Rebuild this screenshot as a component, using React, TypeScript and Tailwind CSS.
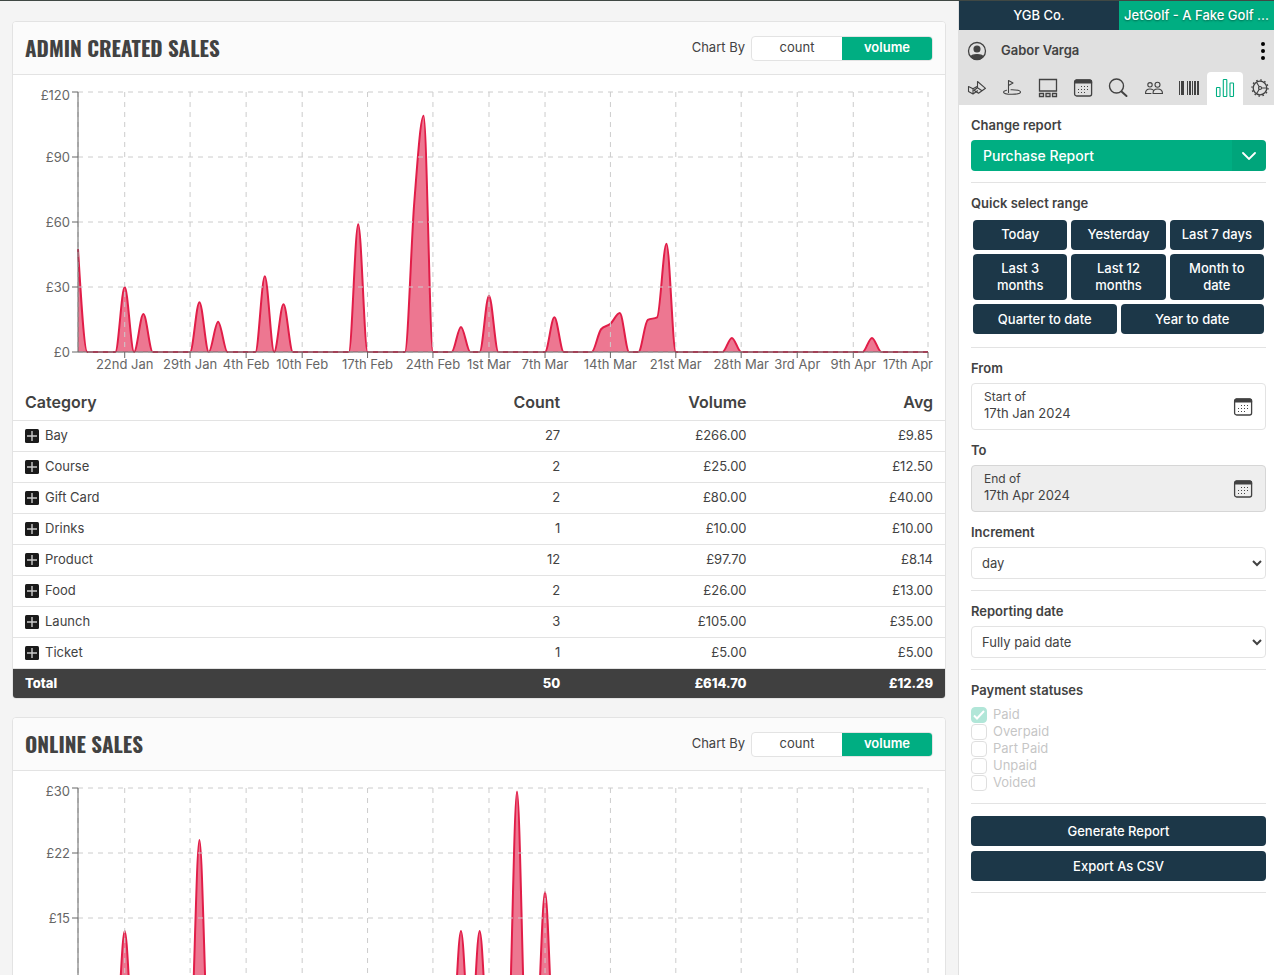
import React, { useLayoutEffect, useRef, useState } from 'react';

type Row = [name: string, count: string, volume: string, avg: string];

const DAYS = 91;

const ticks = [
  { day: 5, label: '22nd Jan' },
  { day: 12, label: '29th Jan' },
  { day: 18, label: '4th Feb' },
  { day: 24, label: '10th Feb' },
  { day: 31, label: '17th Feb' },
  { day: 38, label: '24th Feb' },
  { day: 44, label: '1st Mar' },
  { day: 50, label: '7th Mar' },
  { day: 57, label: '14th Mar' },
  { day: 64, label: '21st Mar' },
  { day: 71, label: '28th Mar' },
  { day: 77, label: '3rd Apr' },
  { day: 83, label: '9th Apr' },
  { day: 91, label: '17th Apr' },
];

const adminSales: Record<number, number> = {
  0: 47.5, 5: 30, 7: 17.5, 13: 23, 15: 14, 20: 35, 22: 22, 30: 59, 36: 69, 37: 109,
  41: 11.5, 44: 26, 51: 16, 56: 10.5, 57: 13, 58: 18, 61: 14.8, 62: 16, 63: 50, 70: 6.5, 85: 6.5,
};

const onlineSales: Record<number, number> = { 5: 13.5, 13: 24, 41: 13.5, 43: 13.5, 47: 29.6, 50: 18 };

const rows: Row[] = [
  ['Bay', '27', '£266.00', '£9.85'],
  ['Course', '2', '£25.00', '£12.50'],
  ['Gift Card', '2', '£80.00', '£40.00'],
  ['Drinks', '1', '£10.00', '£10.00'],
  ['Product', '12', '£97.70', '£8.14'],
  ['Food', '2', '£26.00', '£13.00'],
  ['Launch', '3', '£105.00', '£35.00'],
  ['Ticket', '1', '£5.00', '£5.00'],
];

// Monotone cubic interpolation, so the curve never dips below the baseline
const monotonePath = (pts: [number, number][]) => {
  const n = pts.length;
  const slope = (i: number) => (pts[i + 1][1] - pts[i][1]) / (pts[i + 1][0] - pts[i][0]);
  const tangents = pts.map((_, i) => {
    if (i === 0 || i === n - 1) return 0;
    const a = slope(i - 1);
    const b = slope(i);
    return (Math.sign(a) + Math.sign(b)) * Math.min(Math.abs(a), Math.abs(b), 0.25 * Math.abs(a + b)) || 0;
  });
  tangents[0] = (3 * slope(0) - tangents[1]) / 2;
  let d = `M${pts[0][0]},${pts[0][1]}`;
  for (let i = 1; i < n; i++) {
    const [x0, y0] = pts[i - 1];
    const [x1, y1] = pts[i];
    const dx = (x1 - x0) / 3;
    d += `C${x0 + dx},${y0 + dx * tangents[i - 1]},${x1 - dx},${y1 - dx * tangents[i]},${x1},${y1}`;
  }
  return d;
};

const AreaChart = ({ data, max, yLabels }: { data: Record<number, number>; max: number; yLabels: string[] }) => {
  const ref = useRef<HTMLDivElement>(null);
  const [width, setWidth] = useState(932);

  useLayoutEffect(() => {
    const el = ref.current!;
    const update = () => setWidth(el.clientWidth);
    update();
    const observer = new ResizeObserver(update);
    observer.observe(el);
    return () => observer.disconnect();
  }, []);

  const left = 65;
  const right = width - 17;
  const top = 17;
  const bottom = 277;
  const x = (day: number) => left + (day / DAYS) * (right - left);
  const y = (value: number) => bottom - (value / max) * (bottom - top);
  const points = Array.from({ length: DAYS + 1 }, (_, i): [number, number] => [x(i), y(data[i] ?? 0)]);
  const line = monotonePath(points);
  const yTicks = yLabels.map((label, i) => ({ label, pos: top + (i * (bottom - top)) / (yLabels.length - 1) }));

  return (
    <div ref={ref} className="w-full overflow-hidden">
      <svg width={width} height={310} className="block text-[13px]" fill="#666">
        <path d={`${line}L${right},${bottom}L${left},${bottom}Z`} fill="#e11d48" fillOpacity={0.6} />
        <path d={line} fill="none" stroke="#e11d48" strokeWidth={2} />
        <g stroke="#ccc" strokeDasharray="5 5">
          {yTicks.map((t) => <line key={t.label} x1={left} x2={right} y1={t.pos} y2={t.pos} />)}
          <line x1={left} x2={left} y1={top} y2={bottom} />
          {ticks.map((t) => <line key={t.day} x1={x(t.day)} x2={x(t.day)} y1={top} y2={bottom} />)}
        </g>
        <g stroke="#666">
          <line x1={left} x2={right} y1={bottom} y2={bottom} />
          <line x1={left} x2={left} y1={top} y2={bottom} />
          {yTicks.map((t) => <line key={t.label} x1={left - 6} x2={left} y1={t.pos} y2={t.pos} />)}
          {ticks.map((t) => <line key={t.day} x1={x(t.day)} x2={x(t.day)} y1={bottom} y2={bottom + 6} />)}
        </g>
        {yTicks.map((t, i) => (
          <text key={t.label} x={left - 8} y={t.pos + (i === 0 ? 8 : 5)} textAnchor="end">{t.label}</text>
        ))}
        {ticks.map((t) => (
          <text
            key={t.day}
            x={t.day === DAYS ? right + 5 : x(t.day)}
            y={bottom + 17}
            textAnchor={t.day === DAYS ? 'end' : 'middle'}
          >
            {t.label}
          </text>
        ))}
      </svg>
    </div>
  );
};

const ReportCard = ({ title, children }: { title: string; children: React.ReactNode }) => (
  <section className="bg-white border border-[#e3e3e3] rounded overflow-hidden">
    <header className="h-[53px] px-3 flex items-center justify-between bg-[#fbfbfb] border-b border-[#e3e3e3]">
      <h2 className="font-['Oswald','Open_Sans_Condensed',sans-serif] font-bold text-[21px] uppercase">
        {title}
      </h2>
      <div className="flex items-center gap-1.5">
        <span>Chart By</span>
        <div className="w-[182px] h-[25px] flex border border-[#e3e3e3] rounded overflow-hidden bg-white">
          <button type="button" className="flex-1">count</button>
          <button type="button" className="flex-1 bg-[#00ae82] text-white font-semibold">volume</button>
        </div>
      </div>
    </header>
    {children}
  </section>
);

const PlusBox = () => (
  <svg width="14" height="14" viewBox="0 0 14 14" className="shrink-0">
    <rect width="14" height="14" rx="1.5" fill="#1a1a1a" />
    <path d="M7 2v10M2 7h10" stroke="#ccc" strokeWidth="1.4" />
  </svg>
);

const SalesTable = () => (
  <table className="w-full table-fixed text-right">
    <thead>
      <tr className="h-[35px] text-base border-b border-[#e3e3e3]">
        <th className="w-2/5 px-3 font-semibold text-left">Category</th>
        <th className="px-3 font-semibold">Count</th>
        <th className="px-3 font-semibold">Volume</th>
        <th className="px-3 font-semibold">Avg</th>
      </tr>
    </thead>
    <tbody>
      {rows.map(([name, count, volume, avg]) => (
        <tr key={name} className="h-[31px] border-b border-[#e3e3e3]">
          <td className="px-3">
            <button type="button" className="flex items-center gap-1.5"><PlusBox />{name}</button>
          </td>
          <td className="px-3">{count}</td>
          <td className="px-3">{volume}</td>
          <td className="px-3">{avg}</td>
        </tr>
      ))}
    </tbody>
    <tfoot>
      <tr className="h-[30px] bg-[#404040] text-white font-extrabold">
        <td className="px-3 text-left">Total</td>
        <td className="px-3">50</td>
        <td className="px-3">£614.70</td>
        <td className="px-3">£12.29</td>
      </tr>
    </tfoot>
  </table>
);

const Icon = ({ children }: { children: React.ReactNode }) => (
  <svg width="20" height="20" viewBox="0 0 20 20" fill="none" stroke="currentColor" strokeWidth="1.1" strokeLinejoin="round" strokeLinecap="round">
    {children}
  </svg>
);

const CalendarIcon = () => (
  <Icon>
    <rect x="1.6" y="2" width="17" height="16" rx="2" strokeWidth="1.3" />
    <path d="M1.6 5V4a2 2 0 0 1 2-2h13a2 2 0 0 1 2 2v1z" fill="currentColor" />
    <path
      d="M8 8h1v1H8zM11 8h1v1h-1zM14 8h1v1h-1zM5 11h1v1H5zM8 11h1v1H8zM11 11h1v1h-1zM14 11h1v1h-1zM5 14h1v1H5zM8 14h1v1H8zM11 14h1v1h-1z"
      fill="currentColor"
      stroke="none"
    />
  </Icon>
);

const navIcons = [
  {
    name: 'Bays',
    icon: (
      <Icon>
        <path d="M1.5 8.500l4.500 2.200v5.300l-4.500-2.500zM6 16l4.500-3.200M6 10.700l4.500-2.500M10.500 3.500l8 6.800-3.500 2.500-4.500-3zM10.500 9.800l-3.500 2.500 4.500 3 3.500-2.500" />
      </Icon>
    ),
  },
  {
    name: 'Course',
    icon: (
      <Icon>
        <path d="M6.500 14.500V2.500l4.500 2.500-4.500 2.500M4.500 12.200c-2 .5-3 1.100-3 1.800 0 1.400 3.700 2.300 8.500 2.300s8.500-.9 8.500-2.300-3.700-2.200-8.500-2.200h-1" />
      </Icon>
    ),
  },
  {
    name: 'Screens',
    icon: (
      <Icon>
        <path d="M1.500 1.500h17v11.500h-17zM1.500 15.500h4v3h-4zM8 15.500h4v3h-4zM14.500 15.500h4v3h-4z" strokeLinejoin="miter" strokeWidth="1.300" />
      </Icon>
    ),
  },
  { name: 'Calendar', icon: <CalendarIcon /> },
  {
    name: 'Search',
    icon: <Icon><circle cx="8.500" cy="8" r="7" strokeWidth="1.400" /><path d="M13.500 13.500l5 4.500" strokeWidth="2" /></Icon>,
  },
  {
    name: 'Customers',
    icon: (
      <Icon>
        <circle cx="6" cy="6.800" r="2.200" />
        <circle cx="13.500" cy="6.800" r="2.500" />
        <path d="M9 15.500c0-3 1.500-4.500 4.500-4.500s5 1.500 5 4.500zM7 15.500H1.500c0-3 1.500-4.500 4.500-4.500 1.200 0 2.200.3 3 .9" />
      </Icon>
    ),
  },
  {
    name: 'Barcode',
    icon: (
      <svg width="20" height="20" viewBox="0 0 20 20" fill="currentColor">
        <path d="M0 3h1v14H0zM2 3h3v14H2zM8 3h1v14H8zM10 3h2v14h-2zM13 3h1v14h-1zM15 3h2v14h-2zM18 3h2v14h-2z" />
      </svg>
    ),
  },
  {
    name: 'Reports',
    icon: (
      <Icon>
        <rect x="1.500" y="9.500" width="3.500" height="9" rx=".6" />
        <rect x="8.300" y="1.500" width="3.500" height="17" rx=".6" />
        <rect x="15" y="5" width="3.500" height="13.500" rx=".6" />
      </Icon>
    ),
  },
  {
    name: 'Settings',
    icon: (
      <Icon>
        <circle cx="10" cy="10" r="6.800" strokeWidth="1.300" />
        <circle cx="10" cy="10" r="8" strokeWidth="1.300" strokeDasharray="1.600 2.590" strokeLinecap="butt" />
        <circle cx="10" cy="10" r="1.500" />
        <path d="M11.500 10h5M9.200 8.700L6.700 4.500M9.200 11.300l-2.500 4.200" />
      </Icon>
    ),
  },
];

const FieldLabel = ({ htmlFor, children }: { htmlFor?: string; children: React.ReactNode }) => (
  <label htmlFor={htmlFor} className="block h-5 leading-5 mb-[5px] font-semibold">{children}</label>
);

const Section = ({ children }: { children: React.ReactNode }) => (
  <div className="pt-2.5 pb-[11px] border-b border-[#e3e3e3]">{children}</div>
);

const DateField = ({ id, prefix, date, className }: { id: string; prefix: string; date: string; className: string }) => (
  <button
    id={id}
    type="button"
    className={`w-full h-[47px] px-3 flex items-center justify-between border rounded text-left leading-[17px] ${className}`}
  >
    <span className="pb-0.5">
      <span className="block text-xs leading-4">{prefix}</span>
      <span className="block">{date}</span>
    </span>
    <CalendarIcon />
  </button>
);

const SelectField = ({ id, value }: { id: string; value: string }) => (
  <select id={id} className="w-full h-8 px-1.5 bg-white border border-[#e3e3e3] rounded">
    <option>{value}</option>
  </select>
);

const buttonClass = 'min-h-[30px] px-3 py-1.5 rounded bg-[#1c3748] text-white font-medium leading-[17px]';

const statuses = ['Paid', 'Overpaid', 'Part Paid', 'Unpaid', 'Voided'];

const Sidebar = () => (
  <aside className="w-[316px] shrink-0 bg-white border-l border-[#e0e0e0] overflow-hidden">
    <div className="flex h-[29px] text-white font-medium">
      <button type="button" className="w-40 shrink-0 bg-[#1c3748]">YGB Co.</button>
      <button type="button" className="flex-1 min-w-0 whitespace-nowrap bg-[#00ae82] [text-shadow:0_1px_2px_rgba(0,0,0,0.4)]">
        JetGolf - A Fake Golf ...
      </button>
    </div>

    <div className="bg-[#e0e0e0]">
      <div className="h-[42px] px-2 flex items-center">
        <Icon>
          <circle cx="10" cy="10" r="8.500" strokeWidth="1.300" />
          <circle cx="10" cy="8" r="3" fill="currentColor" />
          <path d="M4 15.500c1.500-2.500 10.500-2.500 12 0-2.500 4-9.500 4-12 0z" fill="currentColor" />
        </Icon>
        <span className="ml-3.5 font-semibold">Gabor Varga</span>
        <button type="button" aria-label="More" className="ml-auto text-black">
          <svg width="6" height="20" viewBox="0 0 6 20" fill="currentColor">
            <circle cx="3" cy="3" r="2" />
            <circle cx="3" cy="10" r="2" />
            <circle cx="3" cy="17" r="2" />
          </svg>
        </button>
      </div>
      <nav className="flex h-[33px] -mr-1">
        {navIcons.map(({ name, icon }) => (
          <button
            key={name}
            type="button"
            aria-label={name}
            className={`flex-1 pb-0.5 flex items-center justify-center ${name === 'Reports' ? 'bg-white rounded-t text-[#00ae82]' : ''}`}
          >
            {icon}
          </button>
        ))}
      </nav>
    </div>

    <div className="pl-3 pr-2">
      <Section>
        <FieldLabel htmlFor="report">Change report</FieldLabel>
        <div className="relative">
          <select id="report" className="block appearance-none w-full h-[31px] px-3 rounded bg-[#00ae82] text-white text-sm font-medium">
            <option>Purchase Report</option>
          </select>
          <span className="absolute inset-y-0 right-0 w-[34px] flex items-center justify-center rounded-r bg-black/5 text-white pointer-events-none">
            <svg width="14" height="8" viewBox="0 0 14 8" fill="none" stroke="currentColor" strokeWidth="1.800" strokeLinecap="round">
              <path d="M1 1l6 6 6-6" />
            </svg>
          </span>
        </div>
      </Section>

      <Section>
        <FieldLabel>Quick select range</FieldLabel>
        <div className="grid grid-cols-6 gap-1 p-0.5">
          {['Today', 'Yesterday', 'Last 7 days'].map((range) => (
            <button key={range} type="button" className="col-span-2 h-[30px] whitespace-nowrap rounded bg-[#1c3748] text-white font-medium">{range}</button>
          ))}
          {['Last 3 months', 'Last 12 months', 'Month to date'].map((range) => (
            <button key={range} type="button" className={`col-span-2 ${buttonClass}`}>{range}</button>
          ))}
          {['Quarter to date', 'Year to date'].map((range) => (
            <button key={range} type="button" className={`col-span-3 ${buttonClass}`}>{range}</button>
          ))}
        </div>
      </Section>

      <Section>
        <div className="flex flex-col gap-2.5">
          <div>
            <FieldLabel htmlFor="from">From</FieldLabel>
            <DateField id="from" prefix="Start of" date="17th Jan 2024" className="border-[#e3e3e3]" />
          </div>
          <div>
            <FieldLabel htmlFor="to">To</FieldLabel>
            <DateField id="to" prefix="End of" date="17th Apr 2024" className="bg-[#eee] border-[#d6d6d6]" />
          </div>
          <div>
            <FieldLabel htmlFor="increment">Increment</FieldLabel>
            <SelectField id="increment" value="day" />
          </div>
        </div>
      </Section>

      <Section>
        <FieldLabel htmlFor="reporting">Reporting date</FieldLabel>
        <SelectField id="reporting" value="Fully paid date" />
      </Section>

      <Section>
        <FieldLabel>Payment statuses</FieldLabel>
        <div className="py-px opacity-30">
          {statuses.map((status) => (
            <label key={status} className="relative flex items-center gap-1.5 h-[17px]">
              <input
                type="checkbox"
                disabled
                defaultChecked={status === 'Paid'}
                className="peer appearance-none size-4 border border-[#999] rounded checked:bg-[#00ae82] checked:border-[#00ae82]"
              />
              <svg className="absolute left-0 hidden peer-checked:block" width="16" height="16" viewBox="0 0 16 16" fill="none" stroke="white" strokeWidth="2">
                <path d="M3 8.500l3 3 7-7.500" />
              </svg>
              {status}
            </label>
          ))}
        </div>
      </Section>

      <div className="flex flex-col gap-[5px] pt-3 pb-[11px] border-b border-[#e3e3e3]">
        <button type="button" className={buttonClass}>Generate Report</button>
        <button type="button" className={buttonClass}>Export As CSV</button>
      </div>
    </div>
  </aside>
);

export default function App() {
  return (
    <div className="h-screen flex border-t border-[#404844] bg-[#f4f4f4] text-[#424242] text-[13px] font-['Inter',sans-serif] overflow-hidden">
      <main className="flex-1 min-w-0 px-3 py-5 flex flex-col gap-[18px] overflow-y-auto [scrollbar-width:none] *:shrink-0">
        <ReportCard title="Admin created sales">
          <AreaChart data={adminSales} max={120} yLabels={['£120', '£90', '£60', '£30', '£0']} />
          <SalesTable />
        </ReportCard>
        <ReportCard title="Online sales">
          <AreaChart data={onlineSales} max={30} yLabels={['£30', '£22', '£15', '£7', '£0']} />
        </ReportCard>
      </main>
      <Sidebar />
    </div>
  );
}
